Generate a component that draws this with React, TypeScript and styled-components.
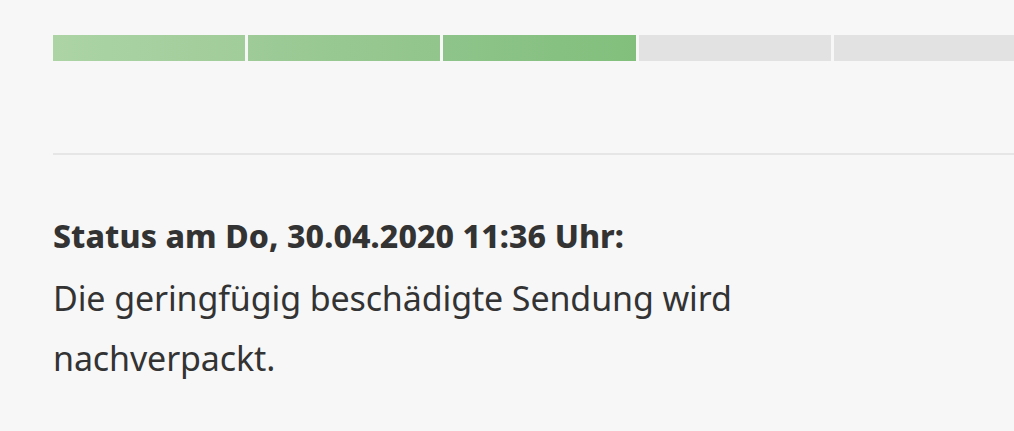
import React from "react";
import styled, { createGlobalStyle } from "styled-components";

const GlobalStyle = createGlobalStyle`
  html, body {
    margin: 0;
    padding: 0;
    background: #f7f7f7;
    overflow: hidden;
  }
  body {
    font-family: "Noto Sans", "Open Sans", sans-serif;
    color: #333333;
  }
`;

const Page = styled.div`
  width: 1014px;
  height: 431px;
  padding: 35px 0 0 53px;
  box-sizing: border-box;
  overflow: hidden;
`;

const Progress = styled.div`
  display: flex;
  gap: 3px;
  width: 973px;
  height: 26px;
`;

const Segment = styled.div<{ $from?: string; $to?: string }>`
  flex: 1;
  background: ${(p) =>
    p.$from ? `linear-gradient(90deg, ${p.$from}, ${p.$to})` : "#e2e2e2"};
`;

const Divider = styled.hr`
  border: none;
  height: 2px;
  background: #e6e6e6;
  margin: 92px 0 0;
  width: 980px;
`;

const StatusTitle = styled.h3`
  margin: 61px 0 0;
  font-size: 32px;
  font-weight: 800;
  line-height: 40px;
  letter-spacing: 0.1px;
`;

const StatusText = styled.p`
  margin: 12px 0 0;
  font-size: 34px;
  font-weight: 400;
  line-height: 60px;
  letter-spacing: -0.12px;
  max-width: 760px;
`;

const segments = [
  { from: "#acd4a5", to: "#a1cd9a" },
  { from: "#9ecb98", to: "#91c58b" },
  { from: "#8ec48a", to: "#82bf7c" },
  {},
  {},
];

export default function App() {
  return (
    <>
      <GlobalStyle />
      <Page>
        <Progress>
          {segments.map((s, i) => (
            <Segment key={i} $from={s.from} $to={s.to} />
          ))}
        </Progress>
        <Divider />
        <StatusTitle>Status am Do, 30.04.2020 11:36 Uhr:</StatusTitle>
        <StatusText>
          Die geringfügig beschädigte Sendung wird
          <br />
          nachverpackt.
        </StatusText>
      </Page>
    </>
  );
}
